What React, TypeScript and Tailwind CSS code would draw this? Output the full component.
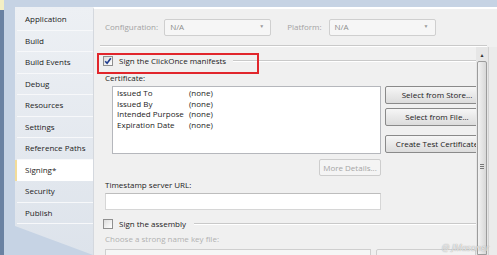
import React from 'react'

const font = { fontFamily: '"Open Sans", "Noto Sans", sans-serif' }

const tabs = [
  'Application',
  'Build',
  'Build Events',
  'Debug',
  'Resources',
  'Settings',
  'Reference Paths',
  'Signing*',
  'Security',
  'Publish',
]

function Check({ checked }: { checked?: boolean }) {
  return (
    <span className="flex h-[10px] w-[10px] shrink-0 items-center justify-center border border-[#8f8f8f] bg-gradient-to-br from-[#dcdcdc] to-white">
      {checked && (
        <svg width="8" height="8" viewBox="0 0 8 8">
          <path d="M1.2 4.2 L3.1 6.3 L6.8 1.2" fill="none" stroke="#1f3c8e" strokeWidth="1.6" />
        </svg>
      )}
    </span>
  )
}

function Combo({ className }: { className?: string }) {
  return (
    <div className={`flex h-[17px] items-center justify-between rounded-[2px] border border-[#cfcfcf] bg-[#f6f6f6] pl-[5px] pr-[6px] text-[8px] text-[#8c8c8c] ${className ?? ''}`}>
      <span>N/A</span>
      <span className="text-[5px] text-[#9a9a9a]">▼</span>
    </div>
  )
}

function Btn({ children }: { children: React.ReactNode }) {
  return (
    <div className="flex h-[18px] w-[104px] items-center justify-center rounded-[2px] border border-[#8a8a8a] bg-gradient-to-b from-[#f6f6f6] to-[#dcdcdc] text-[8px] text-[#1a1a1a]">
      {children}
    </div>
  )
}

function GroupLine({ className }: { className?: string }) {
  return <div className={`h-[2px] flex-1 border-t border-[#c9c9c9] bg-white ${className ?? ''}`} />
}

export default function App() {
  return (
    <div className="relative flex h-[255px] w-[497px] overflow-hidden bg-[#c6d3e4] text-[#1c1c1c]" style={font}>
      {/* outer left edge */}
      <div className="flex w-[4px] shrink-0 flex-col bg-[#6a82a2]">
        <div className="h-[10px] bg-[#f4efc4]" />
      </div>

      <div className="flex min-w-0 flex-1 flex-col">
        <div className="h-[7px] shrink-0" />
        <div className="flex min-h-0 flex-1">
          <div className="w-[11px] shrink-0" />

          {/* tab sidebar */}
          <div className="w-[78px] shrink-0 bg-gradient-to-b from-[#edf0f4] to-[#dde3eb] pl-[2px] pt-[2px] [clip-path:polygon(0_0,100%_0,100%_100%,0_219px)]">
            {tabs.map((t) => {
              const sel = t === 'Signing*'
              return (
                <div
                  key={t}
                  className={
                    sel
                      ? 'relative z-10 -ml-[2px] mr-[-2px] flex h-[21.5px] items-center border-l-2 border-[#f2dc9a] bg-white pl-[8px] text-[8px]'
                      : 'flex h-[21.5px] items-center border-b border-[#f7f8fa] pl-[8px] text-[8px]'
                  }
                >
                  {t}
                </div>
              )
            })}
          </div>

          {/* content */}
          <div className="flex min-w-0 flex-1 flex-col border-l border-t-2 border-[#d4d8de] border-t-white bg-[#f0f0f0]">
            <div className="flex h-[36px] shrink-0 items-center pl-[11px] text-[8px] text-[#a3a3a3]">
              <span>Configuration:</span>
              <Combo className="ml-[6px] w-[107px]" />
              <span className="ml-[16px]">Platform:</span>
              <Combo className="ml-[7px] w-[107px]" />
            </div>
            <div className="ml-[6px] mr-[10px] h-[2px] shrink-0 border-t border-[#c9c9c9] bg-white" />

            <div className="flex min-h-0 flex-1">
              {/* scroll viewport */}
              <div className="relative min-w-0 flex-1 overflow-hidden pl-[11px] text-[8px]">
                <div className="mt-[8px] flex h-[12px] items-center">
                  <span className="-ml-[2px]"><Check checked /></span>
                  <span className="ml-[6px]">Sign the ClickOnce manifests</span>
                  <GroupLine className="ml-[7px]" />
                </div>

                <div className="mt-[6px] h-[10px] leading-[10px]">Certificate:</div>

                <div className="mt-[3px] flex">
                  <div className="ml-[7px] h-[68px] w-[269px] shrink-0 border border-[#b5b7bc] bg-white pl-[4px] pt-[1px] leading-[10.5px]">
                    {[
                      ['Issued To', '(none)'],
                      ['Issued By', '(none)'],
                      ['Intended Purpose', '(none)'],
                      ['Expiration Date', '(none)'],
                    ].map(([k, v]) => (
                      <div key={k} className="flex">
                        <span className="w-[72px]">{k}</span>
                        <span>{v}</span>
                      </div>
                    ))}
                  </div>
                  <div className="ml-[4px] flex shrink-0 flex-col gap-[4px]">
                    <Btn>Select from Store...</Btn>
                    <Btn>Select from File...</Btn>
                    <div className="mt-[5px]">
                      <Btn>Create Test Certificate</Btn>
                    </div>
                  </div>
                </div>

                <div className="ml-[214px] mt-[5px] flex h-[17px] w-[62px] items-center justify-center rounded-[2px] border border-[#cdcdcd] bg-[#f4f4f4] text-[#a5a5a5]">
                  More Details...
                </div>

                <div className="mt-[4px] h-[10px] leading-[10px]">Timestamp server URL:</div>
                <div className="mt-[3px] h-[17px] w-[276px] border border-[#d6d6d6] border-t-[#bdbdbd] bg-white" />

                <div className="mt-[8px] flex h-[12px] items-center">
                  <span className="-ml-[2px]"><Check /></span>
                  <span className="ml-[6px]">Sign the assembly</span>
                  <GroupLine className="ml-[8px]" />
                </div>

                <div className="mt-[4px] h-[10px] leading-[10px] text-[#b0b0b0]">Choose a strong name key file:</div>
                <div className="mt-[5px] flex">
                  <div className="h-[17px] w-[276px] border border-[#cfcfcf] bg-[#f6f6f6]" />
                  <div className="ml-[5px] h-[17px] w-[104px] rounded-[2px] border border-[#cfcfcf] bg-[#f2f2f2]" />
                </div>
              </div>

              {/* scrollbar */}
              <div className="flex w-[12px] shrink-0 flex-col items-center bg-[#e6e6e6]">
                <span className="mt-[5px] text-[5px] leading-[6px] text-[#333]">▲</span>
                <div className="mt-[3px] flex w-[10px] flex-1 items-start justify-center rounded-t-[2px] border border-[#9c9c9c] bg-gradient-to-r from-[#f2f2f2] to-[#d8d8d8] pt-[102px]">
                  <div className="flex flex-col gap-[1px]">
                    <div className="h-[1px] w-[4px] bg-[#777]" />
                    <div className="h-[1px] w-[4px] bg-[#777]" />
                    <div className="h-[1px] w-[4px] bg-[#777]" />
                  </div>
                </div>
              </div>
              <div className="w-[9px] shrink-0 border-l border-[#d2d2d2] bg-[#ebebeb]" />
            </div>
          </div>
        </div>
      </div>

      {/* annotation box */}
      <div className="absolute left-[97px] top-[53px] h-[21px] w-[162px] border-[2.5px] border-[#e1262c]" />

      {/* watermark */}
      <div className="absolute right-[8px] top-[241px] text-[9px] italic text-white/80 [text-shadow:0_0_1px_#777]">
        @ JMasoner
      </div>
    </div>
  )
}
